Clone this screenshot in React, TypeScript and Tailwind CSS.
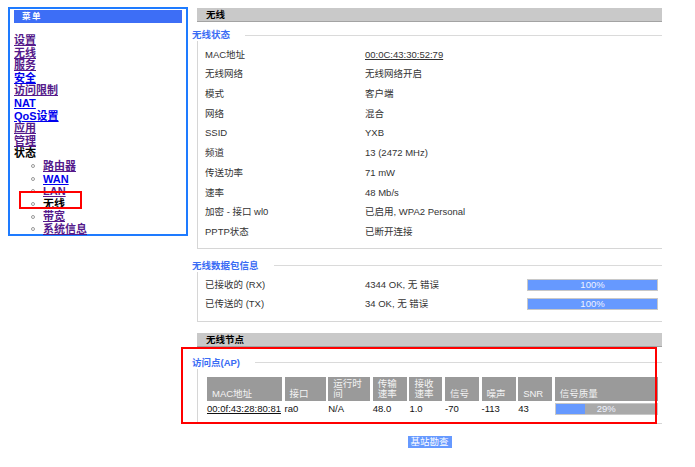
import React from "react";

const PURPLE = "text-[#551a8b]";
const BLUE = "text-[#0000ee]";

const menu = [
  { t: "设置", c: PURPLE },
  { t: "无线", c: PURPLE },
  { t: "服务", c: PURPLE },
  { t: "安全", c: BLUE },
  { t: "访问限制", c: PURPLE },
  { t: "NAT", c: BLUE },
  { t: "QoS设置", c: BLUE },
  { t: "应用", c: PURPLE },
  { t: "管理", c: PURPLE },
];

const subMenu = [
  { t: "路由器", c: PURPLE, link: true },
  { t: "WAN", c: BLUE, link: true },
  { t: "LAN", c: PURPLE, link: true },
  { t: "无线", c: "text-black", link: false },
  { t: "带宽", c: PURPLE, link: true },
  { t: "系统信息", c: PURPLE, link: true },
];

const status = [
  ["MAC地址", "00:0C:43:30:52:79"],
  ["无线网络", "无线网络开启"],
  ["模式", "客户端"],
  ["网络", "混合"],
  ["SSID", "YXB"],
  ["频道", "13 (2472 MHz)"],
  ["传送功率", "71 mW"],
  ["速率", "48 Mb/s"],
  ["加密 - 接口 wl0", "已启用, WPA2 Personal"],
  ["PPTP状态", "已断开连接"],
];

function Bar({ title }: { title: string }) {
  return (
    <div className="ml-[5px] h-[14px] bg-[#c9c9c9] border-b border-[#a3a3a3] pl-[9px] font-bold text-black leading-[13px]">
      {title}
    </div>
  );
}

function Legend({ title, className }: { title: string; className: string }) {
  return (
    <div className={"flex items-center h-[12px] " + className}>
      <span className="text-[#3a6cf4] font-bold whitespace-nowrap">{title}</span>
      <div className="ml-[15px] flex-1 h-px bg-[#dadada]" />
    </div>
  );
}

function Progress({ pct, w }: { pct: number; w: string }) {
  return (
    <div className={"relative h-[12px] bg-[#a9a9a9] border border-[#c8c8c8] " + w}>
      <div className="h-full bg-[#6699ff]" style={{ width: pct + "%" }} />
      <div className="absolute inset-0 flex items-center justify-center text-[#eef2ff] leading-none">
        {pct}%
      </div>
    </div>
  );
}

export default function App() {
  return (
    <div className="relative w-[695px] h-[467px] bg-white overflow-hidden flex items-start font-['Liberation_Sans','Noto_Sans_CJK_SC',sans-serif]">
      {/* menu */}
      <div className="ml-[8px] mt-[7px] w-[180px] h-[229px] border-2 border-[#1e7bff] px-[4px] pt-[1px]">
        <div className="h-[13px] bg-[#3d6ef6] text-white font-bold text-[8.5px] leading-[13px] pl-[8px] tracking-[1.5px]">
          菜单
        </div>
        <div className="mt-[11px] text-[11px] leading-[12.6px] font-bold">
          {menu.map((m) => (
            <div key={m.t}>
              <span className={m.c + " underline"}>{m.t}</span>
            </div>
          ))}
          <div className="text-black">状态</div>
          {subMenu.map((s) => (
            <div key={s.t} className="flex items-center h-[12.6px]">
              <span className="ml-[17px] w-[4px] h-[4px] rounded-full border border-[#999]" />
              <span className={"ml-[8px] " + s.c + (s.link ? " underline" : "")}>{s.t}</span>
            </div>
          ))}
        </div>
      </div>

      {/* content */}
      <div className="ml-[4px] mt-[8px] w-[470px] text-[9.5px] text-[#333]">
        <Bar title="无线" />
        <Legend title="无线状态" className="mt-[7px]" />
        <div className="ml-[5px] border-l border-b border-[#d6d6d6] pt-[4px] pb-[6px]">
          {status.map(([k, v], i) => (
            <div key={k} className="flex items-center h-[19.7px]">
              <span className="ml-[7px] w-[160px]">{k}</span>
              <span className={i === 0 ? "underline" : ""}>{v}</span>
            </div>
          ))}
        </div>

        <Legend title="无线数据包信息" className="mt-[11px]" />
        <div className="ml-[5px] border-l border-b border-[#d6d6d6] pt-[3.5px] pb-[8px]">
          {[
            ["已接收的 (RX)", "4344 OK, 无 错误"],
            ["已传送的 (TX)", "34 OK, 无 错误"],
          ].map(([k, v]) => (
            <div key={k} className="flex items-center h-[19px]">
              <span className="ml-[7px] w-[160px]">{k}</span>
              <span className="w-[162px]">{v}</span>
              <Progress pct={100} w="w-[131px]" />
            </div>
          ))}
        </div>

        <div className="mt-[11px]">
          <Bar title="无线节点" />
        </div>
        <Legend title="访问点(AP)" className="mt-[9.5px]" />
        <div className="ml-[5px] border-l border-b border-[#d6d6d6] pt-[8px] pb-[8px]">
          <div className="ml-[9px] grid grid-cols-[75px_41px_42px_34px_33px_34px_34px_34px_103px] gap-x-[2.6px]">
            {[
              "MAC地址",
              "接口",
              "运行时\n间",
              "传输\n速率",
              "接收\n速率",
              "信号",
              "噪声",
              "SNR",
              "信号质量",
            ].map((h) => (
              <div
                key={h}
                className="h-[24px] bg-[#9a9a9a] text-[#f4f4f4] flex items-end pl-[5px] pb-[1px] leading-[10.5px] whitespace-pre"
              >
                {h}
              </div>
            ))}
            {["00:0f:43:28:80:81", "ra0", "N/A", "48.0", "1.0", "-70", "-113", "43"].map((d, i) => (
              <div
                key={i}
                className={"mt-[2px] h-[12px] flex items-center text-[#111] whitespace-nowrap " + (i === 0 ? "underline" : "")}
              >
                {d}
              </div>
            ))}
            <div className="mt-[2px]">
              <Progress pct={29} w="w-[103px]" />
            </div>
          </div>
        </div>
        <div className="ml-[5px] mt-[12px] flex justify-center">
          <div className="w-[44px] h-[12px] bg-[#6699ff] text-white text-center leading-[12px]">基站勘查</div>
        </div>
      </div>

      {/* annotation boxes */}
      <div className="absolute left-[19px] top-[191px] w-[63px] h-[18px] border-2 border-[#ff0000]" />
      <div className="absolute left-[181px] top-[347px] w-[476px] h-[77px] border-2 border-[#ff0000]" />
    </div>
  );
}
